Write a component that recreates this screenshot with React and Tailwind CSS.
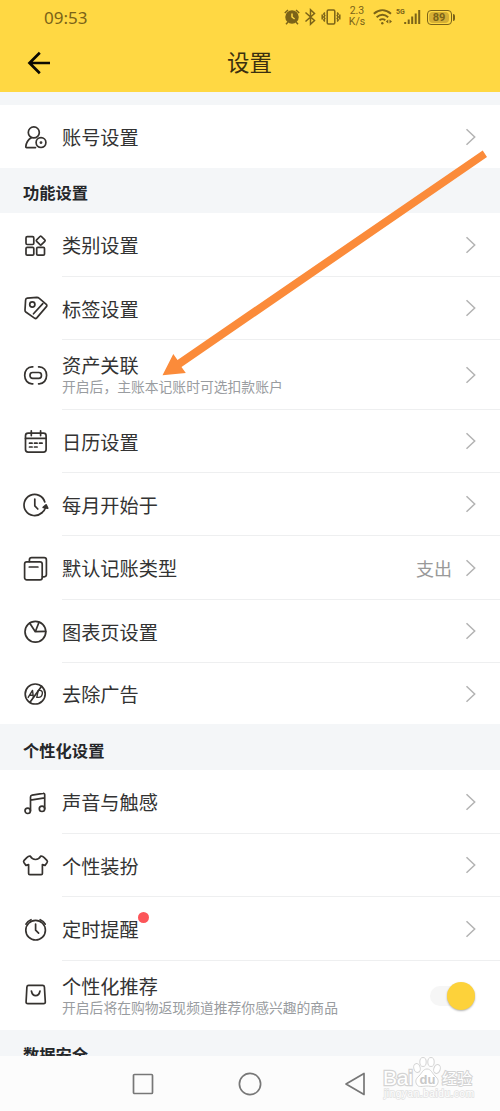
import React, { useState } from 'react'

const icons = {
  account: (
    <>
      <circle cx="11.8" cy="9.4" r="5.5" />
      <path d="M13.5 24.6H4.6c-.6 0-.9-.4-.8-1 .4-4 2.3-7 5.400-8.900" />
      <circle cx="19" cy="19.6" r="4.9" />
      <circle cx="19" cy="19.6" r=".6" fill="currentColor" />
    </>
  ),
  category: (
    <>
      <rect x="4" y="4.700" width="7.800" height="7.800" rx="1.200" />
      <rect x="4" y="15.400" width="7.800" height="7.800" rx="1.200" />
      <rect x="14.700" y="15.400" width="7.800" height="7.800" rx="1.200" />
      <rect x="15.300" y="5.200" width="6.800" height="6.800" rx="1" transform="rotate(45 18.700 8.600)" />
    </>
  ),
  tag: (
    <>
      <path d="M5.3 3.2 14.9 2.400c.9 0 1.500.2 2.100.8l7.300 6.200c.7.6.7 1.500.1 2.200L14.800 22.900c-.7.7-1.500.8-2.300.2L3.800 17c-.6-.5-.9-1-.8-1.800L3.600 5c.1-1 .7-1.700 1.700-1.800Z" />
      <circle cx="10.300" cy="9.500" r="2.600" />
      <path d="M20.800 8.600 11.500 18.800" />
    </>
  ),
  link: (
    <>
      <path d="M10.800 4.800H10c-4.300 0-7.300 3.600-7.300 8.500s3 8.500 7.300 8.500h.8M16.600 4.800h.7c4.300 0 7.300 3.600 7.300 8.500s-3 8.500-7.300 8.500h-.7" />
      <rect x="8" y="10.500" width="11.400" height="5.800" rx="2.600" />
    </>
  ),
  calendar: (
    <>
      <rect x="3.500" y="5.200" width="20.600" height="19" rx="2.600" />
      <path d="M9.300 2.800v4.800M18.600 2.800v4.800M3.500 10.400h20.600" />
      <path d="M7.500 15.200h2.600M12.500 15.200h2.600M17.500 15.200h2.600M7.500 19h2.600M12.500 19h2.600" />
    </>
  ),
  clock: (
    <>
      <path d="M19.600 22a10.600 10.600 0 1 1 3.200-11" />
      <path d="M12.800 8v6.800l3 3.200M19.600 22c2.200-1.400 3.500-3.400 4-6" />
      <path d="m21.200 16.400 2.900-2.600 1.600 3.400Z" fill="currentColor" />
    </>
  ),
  cards: (
    <>
      <rect x="2.600" y="6.900" width="17.600" height="18" rx="2.200" />
      <path d="M7.400 6.600V5c0-1.500.8-2.300 2.300-2.300h12.400c1.500 0 2.300.8 2.300 2.300v14.600c0 1.400-.8 2.200-2.200 2.200h-1.800M7.300 12h8.600" />
    </>
  ),
  chart: (
    <>
      <circle cx="13.400" cy="13.700" r="10.400" />
      <path d="m7.800 5.200 5.500 8.500 3.700-9.400M13.300 13.700l10.400-.3" />
    </>
  ),
  noAds: (
    <>
      <circle cx="13.200" cy="14" r="10" />
      <path d="M19.600 6.200 8 22.200" />
      <path d="m6.200 17.400 4.300-7 .9 7M7.800 15.200h3.400M16.200 10.400h1.600c2 0 2.900 1.400 2.500 3.500s-1.700 3.500-3.700 3.500h-1.800Z" strokeWidth="1.400" />
    </>
  ),
  music: (
    <>
      <circle cx="5.700" cy="21.800" r="2.700" />
      <circle cx="20" cy="19.800" r="2.700" />
      <path d="M8.500 21.800V8c0-1.100.5-1.700 1.600-1.900l11-1.700c1-.2 1.600.3 1.600 1.300v14.100M8.500 11.200l14.200-2.400" />
    </>
  ),
  shirt: (
    <path d="M8.300 4.200C7 4 5.800 4.600 4.800 5.600L1.900 8.700c-.5.600-.4 1.100 0 1.700l2.100 3 2.600-.8v8.900c0 .8.400 1.200 1.200 1.200h11.400c.8 0 1.200-.4 1.200-1.200v-8.900l2.600.8 2.100-3c.4-.6.5-1.100 0-1.700l-2.900-3.100c-1-1-2.200-1.600-3.500-1.400-1.200 2.300-2.800 3.300-5.200 3.300S9.500 6.500 8.300 4.200Z" />
  ),
  alarm: (
    <>
      <circle cx="13.600" cy="14.200" r="9.800" />
      <path d="M13.600 8v6.200l3 3M4 8.200c1-2.200 2.700-3.700 5-4.500M23.200 8.200c-1-2.200-2.700-3.700-5-4.500" />
    </>
  ),
  bag: (
    <>
      <path d="M6.600 3.300h14c1.100 0 1.700.6 1.800 1.700l.9 14.700c.1 1.200-.5 1.900-1.700 1.900H5.800c-1.200 0-1.800-.7-1.700-1.900L4.900 5c.1-1.100.7-1.700 1.700-1.700Z" />
      <path d="M9.400 9c.6 3 2 4.700 4.300 4.700S17.400 12 18 9" />
    </>
  ),
}

const featureRows = [
  { icon: 'category', label: '类别设置', height: 'h-16' },
  { icon: 'tag', label: '标签设置', height: 'h-[63px]' },
  { icon: 'link', label: '资产关联', hint: '开启后，主账本记账时可选扣款账户', height: 'h-[70px]' },
  { icon: 'calendar', label: '日历设置' },
  { icon: 'clock', label: '每月开始于' },
  { icon: 'cards', label: '默认记账类型', value: '支出', height: 'h-16' },
  { icon: 'chart', label: '图表页设置' },
  { icon: 'noAds', label: '去除广告', height: 'h-[61px]', last: true },
]

const personalRows = [
  { icon: 'music', label: '声音与触感', height: 'h-16' },
  { icon: 'shirt', label: '个性装扮' },
  { icon: 'alarm', label: '定时提醒', height: 'h-16', dot: true },
]

function App() {
  const [recommend, setRecommend] = useState(true)

  return (
    <div className="relative flex h-[1111px] w-[500px] flex-col overflow-hidden bg-[#f4f6f8] font-['Noto_Sans','Noto_Sans_CJK_SC',sans-serif] text-[#333]">
      <header className="h-[92px] shrink-0 bg-[#ffd843]">
        <StatusBar />
        <div className="flex h-[57px] items-center pl-[27px]">
          <button aria-label="返回" className="w-6">
            <svg className="h-6 w-6" viewBox="0 0 24 24" fill="none" stroke="#0c0a02" strokeWidth="2.700">
              <path d="M23 12H2.500M12.800 1.800 2.500 12l10.300 10.200" />
            </svg>
          </button>
          <h1 className="flex-1 pr-[52px] pt-px text-center text-[22.500px] leading-8 text-[#3b3010]">设置</h1>
        </div>
      </header>

      <main className="min-h-0 flex-1 overflow-hidden pt-[13px]">
        <Row icon="account" label="账号设置" last />
        <SectionTitle>功能设置</SectionTitle>
        {featureRows.map((row) => (
          <Row key={row.label} {...row} />
        ))}
        <SectionTitle tall>个性化设置</SectionTitle>
        {personalRows.map((row) => (
          <Row key={row.label} {...row} />
        ))}
        <Row icon="bag" label="个性化推荐" hint="开启后将在购物返现频道推荐你感兴趣的商品" height="h-[69px]" last>
          <Toggle checked={recommend} onChange={setRecommend} />
        </Row>
        <SectionTitle>数据安全</SectionTitle>
      </main>

      <NavigationBar />

      {/* Pointer to the asset row */}
      <svg className="pointer-events-none absolute left-0 top-0" width="500" height="400">
        <path d="M162.500 375.300 173.300 354l4.200 6L482.700 150.500l4.300 6.500L181.500 367l4.300 6Z" fill="#fb8b3a" />
      </svg>
      <Watermark />
    </div>
  )
}

function StatusBar() {
  return (
    <div className="flex h-[34px] items-center pl-[44px] text-[#7b6318]">
      <span className="w-[240px] text-[17px] leading-none">09:53</span>
      {/* Alarm */}
      <svg width="16" height="18" viewBox="0 0 16 18" fill="none" stroke="currentColor" strokeWidth="1.500">
        <circle cx="8" cy="9" r="6" fill="currentColor" />
        <path d="M.8 5 4 2M15.200 5 12 2M4 14l-2 2.200M12 14l2 2.200" />
        <path d="M8 5.500V9l2.600 2" stroke="#ffd843" />
      </svg>
      {/* Bluetooth */}
      <svg className="ml-1" width="13" height="18" viewBox="0 0 13 18" fill="none" stroke="currentColor" strokeWidth="1.500">
        <path d="m1.500 4.500 9 8L6.500 16.200V1.800l4 3.700-9 8" />
      </svg>
      {/* Vibrate */}
      <svg className="ml-1" width="20" height="18" viewBox="0 0 20 18" fill="none" stroke="currentColor" strokeWidth="1.500">
        <rect x="6.200" y="2" width="7.600" height="14" rx="1.200" />
        <path d="m3.800 4.500-1 1.500 1 1.500-1 1.500 1 1.500-1 1.500 1 1.500M1.200 6.500v5M16.200 4.500l1 1.500-1 1.500 1 1.500-1 1.500 1 1.500-1 1.500M18.800 6.500v5" />
      </svg>
      <span className="ml-1.5 flex w-5 flex-col text-center font-['Roboto',sans-serif] text-[10.500px] leading-[10px]">
        <span className="h-2.5 -translate-y-px">2.3</span>
        <span className="h-2.5">K/s</span>
      </span>
      {/* Wi-Fi */}
      <svg className="ml-1.5" width="20" height="18" viewBox="0 0 20 18" fill="none" stroke="currentColor" strokeWidth="1.900">
        <path d="M.8 5.800c5.300-4.700 11.900-4.700 17.200 0M3.600 9.200c3.700-3.200 8-3.200 11.600 0M6.500 12.300c1.900-1.500 4-1.500 5.800 0" />
        <circle cx="9.300" cy="15.300" r="1.200" fill="currentColor" stroke="none" />
        <path d="m15.300 11.500-2.500 2 2.500 2ZM16.500 11.500l2.500 2-2.500 2Z" fill="currentColor" stroke="none" />
      </svg>
      <span className="ml-[3px] w-2 self-start pt-[9px] font-['Roboto',sans-serif] text-[7px] font-bold leading-none">5G</span>
      {/* Signal */}
      <svg width="17" height="18" viewBox="0 0 17 18" fill="currentColor">
        <path d="M.2 14h2v2h-2zM3.700 11.500h2V16h-2zM7.200 8.500h2V16h-2zM10.700 5.500h2V16h-2zM14.200 2h2v14h-2z" />
      </svg>
      {/* Battery */}
      <span className="ml-1.5 flex items-center">
        <span className="flex h-[15px] w-[25px] items-center rounded-[4px] border-[1.500px] border-current p-px">
          <span className="flex h-full w-[20px] items-center justify-center rounded-sm bg-[#d5af35] font-['Roboto',sans-serif] text-[11px] font-bold leading-none">
            89
          </span>
        </span>
        <span className="ml-px h-[7px] w-[2px] rounded-r bg-current" />
      </span>
    </div>
  )
}

function SectionTitle({ tall, children }) {
  return (
    <h2
      className={`flex items-center bg-[#f4f6f8] pl-[23px] text-[16.300px] font-bold leading-none text-[#25272a] ${
        tall ? 'h-[46px] pt-2' : 'h-[45px] pt-1.5'
      }`}
    >
      {children}
    </h2>
  )
}

function Row({ icon, label, hint, value, dot, last, height = 'h-[63px]', children }) {
  return (
    <div className={`flex bg-white pl-[22px] ${height}`}>
      <svg
        className="h-[27px] w-[27px] shrink-0 self-center text-[#35322f]"
        viewBox="0 0 27 27"
        fill="none"
        stroke="currentColor"
        strokeWidth="1.700"
        strokeLinecap="round"
        strokeLinejoin="round"
      >
        {icons[icon]}
      </svg>
      <div className={`ml-[13px] flex flex-1 items-center pr-[23px] ${last ? '' : 'border-b border-[#eeeff0]'}`}>
        <div className={`flex-1 ${hint ? 'pt-[2px]' : 'pt-[3px]'}`}>
          <div className="text-[19.200px] leading-[22px]">
            <span className="relative">
              {label}
              {dot && <span className="absolute -right-2.5 -top-1 h-[11px] w-[11px] rounded-full bg-[#fc5559]" />}
            </span>
          </div>
          {hint && <div className="whitespace-nowrap text-[13.800px] leading-5 text-[#999ca0]">{hint}</div>}
        </div>
        {value && <span className="mr-[13px] pt-0.5 text-[18px] leading-none text-[#999]">{value}</span>}
        {children || (
          <svg width="12" height="18" viewBox="0 0 12 18" fill="none" stroke="#b3b3b3" strokeWidth="1.500">
            <path d="m1.500 1.200 8.200 7.800-8.200 7.800" />
          </svg>
        )}
      </div>
    </div>
  )
}

function Toggle({ checked, onChange }) {
  return (
    <button
      role="switch"
      aria-checked={checked}
      onClick={() => onChange(!checked)}
      className={`mr-0.5 flex h-5 w-[45px] items-center rounded-full bg-[#f6f6f6] ${checked ? 'justify-end' : 'justify-start'}`}
    >
      <span className="h-[28px] w-[28px] shrink-0 rounded-full bg-[#fdd23a] shadow-[0_1px_2px_rgba(0,0,0,0.3)]" />
    </button>
  )
}

function NavigationBar() {
  return (
    <nav className="flex h-[55px] shrink-0 items-center bg-[#fcfcfc] pl-[132px] text-[#777]">
      <svg width="22" height="24" viewBox="0 0 22 24" fill="none" stroke="currentColor" strokeWidth="1.700">
        <rect x="1.500" y="2.500" width="19" height="19" rx="1" />
      </svg>
      <svg className="ml-[84px]" width="24" height="24" viewBox="0 0 24 24" fill="none" stroke="currentColor" strokeWidth="1.700">
        <circle cx="12" cy="12" r="10.600" />
      </svg>
      <svg className="ml-[82px]" width="24" height="24" viewBox="0 0 24 24" fill="none" stroke="currentColor" strokeWidth="1.700" strokeLinejoin="round">
        <path d="M20 1.500v21L2 12Z" />
      </svg>
    </nav>
  )
}

function Watermark() {
  return (
    <svg
      className="pointer-events-none absolute left-[376px] top-[1052px]"
      width="110"
      height="52"
      viewBox="0 0 110 52"
      fill="#fff"
      stroke="#d4d4d4"
      strokeWidth="1"
      fontFamily="'Liberation Sans', 'Noto Sans CJK SC', sans-serif"
    >
      <text x="7" y="33" fontSize="21" textLength="30" paintOrder="stroke" strokeWidth="2.500">Bai</text>
      <ellipse cx="41" cy="16" rx="3.200" ry="4.500" transform="rotate(-15 41 16)" />
      <ellipse cx="47" cy="10" rx="3.200" ry="4.500" />
      <ellipse cx="55" cy="10" rx="3.200" ry="4.500" />
      <ellipse cx="61" cy="17" rx="3.200" ry="4.500" transform="rotate(18 61 17)" />
      <path d="M51 17c4 0 5 4 8 7 3 2.500 4 5 2.500 8-2 4-6 2-10.500 2s-8.500 2-10.500-2c-1.500-3-.5-5.500 2.500-8 3-3 4-7 8-7Z" />
      <text x="43.500" y="31.500" fontSize="13" fontWeight="bold" fill="#c8c8c8" stroke="none">du</text>
      <text x="66" y="32" fontSize="15" textLength="30" paintOrder="stroke" strokeWidth="2">经验</text>
      <text x="8" y="45" fontSize="10" textLength="90" stroke="#e2e2e2" paintOrder="stroke" strokeWidth="1.500">jingyan.baidu.com</text>
    </svg>
  )
}

export default App
